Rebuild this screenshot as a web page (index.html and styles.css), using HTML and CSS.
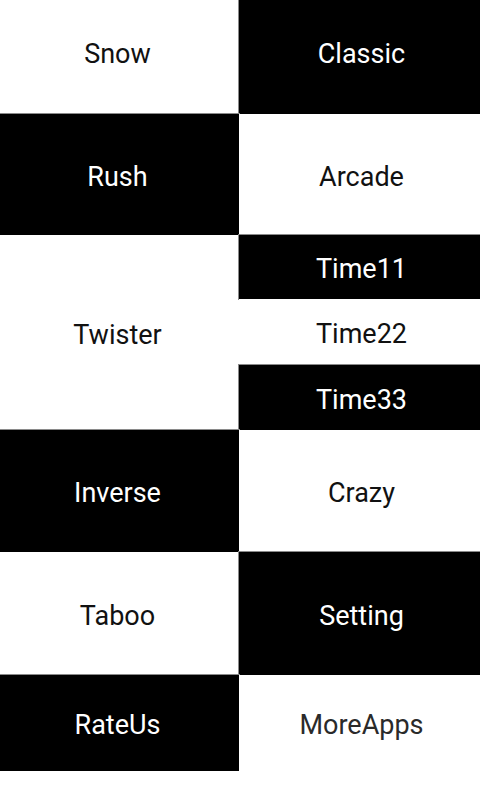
FILE: index.html
```html
<!DOCTYPE html>
<html lang="en">
<head>
    <meta charset="UTF-8">
    <meta name="viewport" content="width=device-width, initial-scale=1.0">
    <title>Modes</title>
    <link rel="stylesheet" href="styles.css">
</head>
<body>
    <div class="menu">
        <div class="tile left white top">Snow</div>
        <div class="tile right black top">Classic</div>
        <div class="tile left black">Rush</div>
        <div class="tile right white">Arcade</div>
        <div class="tile left white twister">Twister</div>
        <div class="tile right black">Time11</div>
        <div class="tile right white">Time22</div>
        <div class="tile right black">Time33</div>
        <div class="tile left black">Inverse</div>
        <div class="tile right white">Crazy</div>
        <div class="tile left white">Taboo</div>
        <div class="tile right black">Setting</div>
        <div class="tile left black">RateUs</div>
        <div class="tile right white more">MoreApps</div>
    </div>
</body>
</html>
```

FILE: styles.css
```css
body {
    margin: 0;
    background: #fff;
    font-family: Roboto, "Liberation Sans", sans-serif;
}
.menu {
    display: grid;
    grid-template-columns: 239px 241px;
    grid-template-rows: 114px 121px 64px 66px 65px 122px 123px 96px;
}
.tile {
    display: flex;
    align-items: center;
    justify-content: center;
    font-size: 27px;
    box-sizing: border-box;
    padding-top: 4px;
}
.left {
    padding-right: 4px;
}
.right {
    padding-left: 4px;
}
.top {
    padding-top: 0;
    padding-bottom: 6px;
}
.black {
    background: #000;
    color: #fff;
    box-shadow: 0 0 0 1px #8a8a8a;
}
.white {
    background: #fff;
    color: #111;
}
.twister {
    grid-row: span 3;
}
.more {
    color: #2a2a2a;
}
```
